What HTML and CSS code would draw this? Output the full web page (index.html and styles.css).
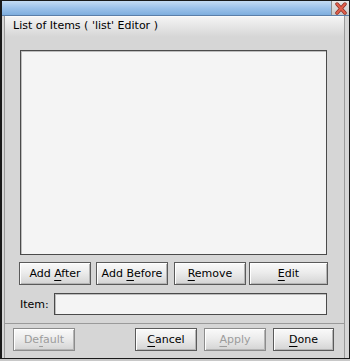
FILE: index.html
```html
<!DOCTYPE html>
<html lang="en">
<head>
    <meta charset="UTF-8">
    <title>List Editor</title>
    <link rel="stylesheet" href="styles.css">
</head>
<body>
    <div class="window">
        <div class="titlebar">
            <div class="close">
                <svg width="14" height="13" viewBox="0 0 14 13">
                    <path d="M3 2 L11 11 M11 2 L3 11" stroke="#8a2a20" stroke-width="3.4" stroke-linecap="round"/>
                    <path d="M3 2 L11 11 M11 2 L3 11" stroke="#e2604c" stroke-width="2" stroke-linecap="round"/>
                </svg>
            </div>
        </div>
        <div class="panel">
            <div class="header">List of Items ( 'list' Editor )</div>
            <div class="content">
                <div class="listbox"></div>
                <div class="actions">
                    <button class="btn w72">Add <u>A</u>fter</button>
                    <button class="btn w72 gap6">Add <u>B</u>efore</button>
                    <button class="btn w72 gap3"><u>R</u>emove</button>
                    <button class="btn w79"><u>E</u>dit</button>
                </div>
                <div class="item-row">
                    <label for="item">Item:</label>
                    <input type="text" id="item">
                </div>
            </div>
            <div class="footer">
                <button class="btn w62 disabled">De<u>f</u>ault</button>
                <span class="spacer"></span>
                <button class="btn w62"><u>C</u>ancel</button>
                <button class="btn w62 disabled"><u>A</u>pply</button>
                <button class="btn w61"><u>D</u>one</button>
            </div>
        </div>
    </div>
</body>
</html>
```

FILE: styles.css
```css
body {
    margin: 0;
    background-color: #c8c8c8;
    font-family: "DejaVu Sans", Verdana, sans-serif;
    font-size: 11px;
    color: #000;
}
.window {
    width: 350px;
    height: 359px;
    box-sizing: border-box;
    border: 1px solid #1a1a1a;
    border-left-width: 2px;
    background-color: #d6d6d6;
    display: flex;
    flex-direction: column;
}
.titlebar {
    height: 14px;
    background: linear-gradient(#c4dcf4, #9cc2ea 50%, #7eaede);
    border-bottom: 1px solid #5a7ea8;
    display: flex;
    justify-content: flex-end;
}
.close {
    width: 17px;
    height: 14px;
    background: linear-gradient(#e8e8e8, #c8c8c8);
    border-left: 1px solid #8a8a8a;
    display: flex;
    align-items: center;
    justify-content: center;
}
.panel {
    flex: 1;
    margin: 0 4px 0 2px;
    border-left: 1px solid #9a9a9a;
    border-right: 1px solid #9a9a9a;
    display: flex;
    flex-direction: column;
}
.header {
    height: 20px;
    line-height: 18px;
    padding-left: 8px;
    background: linear-gradient(#f4f4f4, #d6d6d6);
    border-top: 1px solid #fafafa;
}
.content {
    flex: 1;
    padding: 13px 17px 0 15px;
}
.listbox {
    height: 203px;
    background-color: #f4f4f4;
    border: 1px solid #4a4a4a;
    box-shadow: inset 1px 1px 0 #bdbdbd;
}
.actions {
    display: flex;
    margin-top: 7px;
    margin-left: -1px;
}
.btn {
    flex-shrink: 0;
    height: 23px;
    box-sizing: border-box;
    padding: 0;
    font-family: inherit;
    font-size: 11px;
    color: #000;
    border: 1px solid #5a5a5a;
    background: linear-gradient(#fafafa, #ececec 45%, #d4d4d4);
    box-shadow: inset 1px 1px 0 #ffffff, inset -1px -1px 0 #b4b4b4;
}
.btn u {
    text-decoration: underline;
    text-underline-offset: 3px;
}
.actions .btn {
    margin-right: 5px;
}
.actions .btn.gap6 {
    margin-right: 6px;
}
.actions .btn.gap3 {
    margin-right: 3px;
}
.actions .btn:last-child {
    margin-right: 0;
}
.w72 { width: 72px; }
.w79 { width: 79px; }
.w62 { width: 62px; }
.w61 { width: 61px; }
.item-row {
    display: flex;
    align-items: center;
    margin-top: 8px;
}
.item-row label {
    width: 34px;
}
.item-row input {
    width: 274px;
    height: 22px;
    box-sizing: border-box;
    margin: 0;
    background-color: #f4f4f4;
    border: 1px solid #4a4a4a;
    box-shadow: inset 1px 1px 0 #bdbdbd;
}
.footer {
    height: 35px;
    border-top: 1px solid #9a9a9a;
    display: flex;
    align-items: flex-start;
    padding: 4px 10px 0 8px;
    box-sizing: border-box;
}
.footer .btn {
    margin-left: 7px;
}
.footer .btn:first-child {
    margin-left: 0;
}
.spacer {
    flex: 1;
}
.btn.disabled {
    color: #9c9c9c;
    border-color: #8c8c8c;
}
```
